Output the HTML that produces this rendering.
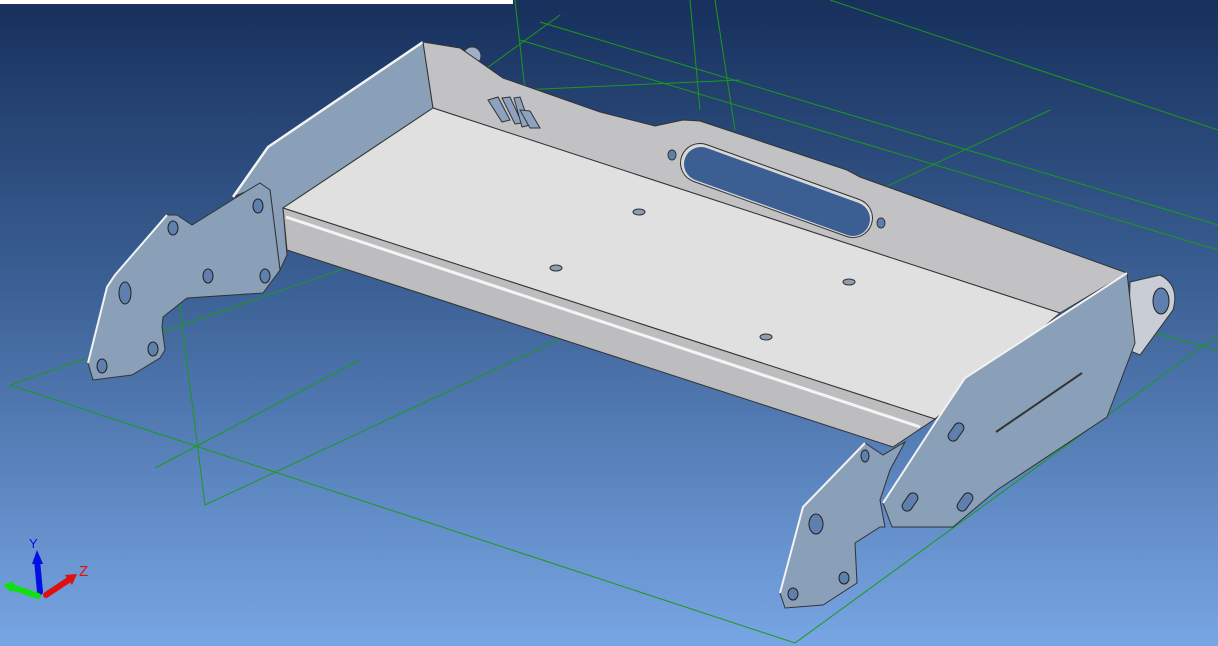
<!DOCTYPE html>
<html><head><meta charset="utf-8"><style>
html,body{margin:0;padding:0;width:1218px;height:646px;overflow:hidden;background:#2a4a7a}
svg{display:block}
</style></head><body>
<svg width="1218" height="646" viewBox="0 0 1218 646" xmlns="http://www.w3.org/2000/svg">
<defs>
<linearGradient id="bg" x1="0" y1="0" x2="0" y2="1">
<stop offset="0" stop-color="#17305c"/>
<stop offset="0.45" stop-color="#3c6196"/>
<stop offset="1" stop-color="#78a6e4"/>
</linearGradient>
</defs>
<rect width="1218" height="646" fill="url(#bg)"/>
<rect x="0" y="0" width="513" height="4" fill="#fff"/>
<g stroke="#1a9a1a" stroke-width="1" fill="none">
<polyline points="10,385 795,643 1218,335"/>
<line x1="10" y1="385" x2="440" y2="235"/>
<polyline points="178,292 205,505 1050,110"/>
<line x1="178" y1="292" x2="560" y2="15"/>
<line x1="155" y1="468" x2="360" y2="360"/>
<line x1="515" y1="0" x2="525" y2="90"/>
<line x1="520" y1="40" x2="1218" y2="250"/>
<line x1="540" y1="22" x2="1218" y2="225"/>
<line x1="830" y1="0" x2="1218" y2="130"/>
<line x1="690" y1="0" x2="700" y2="110"/>
<line x1="715" y1="0" x2="735" y2="130"/>
<line x1="520" y1="90" x2="740" y2="80"/>
<line x1="1030" y1="300" x2="1218" y2="350"/>
</g>
<polygon points="423,42 268,147 233,197 245,192 270,190 280,270 287,255 283,208 433,108" fill="#8a9fb8" stroke="#333" stroke-width="1"/>
<polyline points="423,42 268,147 233,197" fill="none" stroke="#f2f2f2" stroke-width="2.5"/>
<circle cx="472" cy="56" r="9" fill="#9fb0c6" stroke="#333"/>
<polygon points="423,42 460,48 503,78 600,112 655,126 683,120 700,121 847,170 860,177 1127,273 1060,313 433,108" fill="#c2c2c4" stroke="#333" stroke-width="1"/>
<line x1="700" y1="163" x2="853" y2="218" stroke="#333" stroke-width="40" stroke-linecap="round"/>
<line x1="700" y1="163" x2="853" y2="218" stroke="#d8d8d8" stroke-width="38" stroke-linecap="round"/>
<line x1="701" y1="164" x2="853" y2="219" stroke="#3b5e93" stroke-width="34" stroke-linecap="round"/>
<g fill="#5f7fae" stroke="#333"><ellipse cx="672" cy="155" rx="4" ry="5"/><ellipse cx="881" cy="223" rx="4" ry="5"/></g>
<polygon points="433,108 1060,313 935,419 283,208" fill="#e0e0e1" stroke="#333" stroke-width="1"/>
<polygon points="283,208 935,419 893,447 287,250" fill="#bdbdbf" stroke="#333" stroke-width="1"/>
<line x1="286" y1="217" x2="920" y2="427" stroke="#f4f4f4" stroke-width="3"/>
<g fill="#8f9db0" stroke="#333"><ellipse cx="639" cy="212" rx="6" ry="3"/><ellipse cx="556" cy="268" rx="6" ry="3"/><ellipse cx="849" cy="282" rx="6" ry="3"/><ellipse cx="766" cy="337" rx="6" ry="3"/></g>
<g fill="#8ea2c0" stroke="#333"><polygon points="488,100 498,97 510,120 502,122"/><polygon points="502,98 510,97 522,123 515,124"/><polygon points="514,98 520,97 530,125 522,127"/><polygon points="520,110 530,111 540,128 530,128"/></g>
<polygon points="260,183 270,190 280,270 263,293 187,298 163,317 162,327 165,350 160,358 132,375 93,380 88,363 107,287 115,275 167,215 177,215 192,225 245,192" fill="#8a9fb8" stroke="#333" stroke-width="1"/>
<polyline points="88,363 107,287 115,275 167,215" fill="none" stroke="#f2f2f2" stroke-width="2"/>
<g fill="#5f7fae" stroke="#222"><ellipse cx="173" cy="228" rx="5" ry="7"/><ellipse cx="258" cy="206" rx="5" ry="7"/><ellipse cx="125" cy="293" rx="6" ry="11"/><ellipse cx="208" cy="276" rx="5" ry="7"/><ellipse cx="265" cy="276" rx="5" ry="7"/><ellipse cx="153" cy="349" rx="5" ry="7"/><ellipse cx="102" cy="366" rx="5" ry="7"/></g>
<path d="M1130,282 L1160,275 Q1180,285 1173,310 L1140,355 L1128,350 Z" fill="#c8cdd6" stroke="#333"/>
<ellipse cx="1161" cy="301" rx="8" ry="13" fill="#5f7fae" stroke="#222"/>
<polygon points="1127,273 1135,343 1107,417 997,490 953,527 892,527 883,503 937,420 965,378" fill="#8a9fb8" stroke="#333" stroke-width="1"/>
<polyline points="1127,273 965,378 937,420 883,503" fill="none" stroke="#f2f2f2" stroke-width="2"/>
<line x1="1082" y1="373" x2="996" y2="432" stroke="#333" stroke-width="2"/>
<g fill="#5f7fae" stroke="#222"><rect x="951" y="422" width="10" height="20" rx="5" transform="rotate(35 956 432)"/><rect x="905" y="492" width="10" height="20" rx="5" transform="rotate(35 910 502)"/><rect x="960" y="492" width="10" height="20" rx="5" transform="rotate(35 965 502)"/></g>
<polygon points="865,443 883,455 905,442 890,470 880,500 885,527 880,527 855,543 857,583 823,605 785,608 780,593 803,507" fill="#8a9fb8" stroke="#333" stroke-width="1"/>
<polyline points="780,593 803,507 865,443" fill="none" stroke="#f2f2f2" stroke-width="2"/>
<g fill="#5f7fae" stroke="#222"><ellipse cx="865" cy="456" rx="4" ry="6"/><ellipse cx="816" cy="524" rx="7" ry="10"/><ellipse cx="844" cy="578" rx="5" ry="6"/><ellipse cx="793" cy="594" rx="5" ry="6"/></g>
<g stroke-linecap="round">
<line x1="40" y1="592" x2="37" y2="560" stroke="#0010e0" stroke-width="6"/>
<polygon points="32,564 37,550 43,564" fill="#0010e0"/>
<line x1="38" y1="596" x2="12" y2="587" stroke="#10e010" stroke-width="6"/>
<polygon points="14,581 3,585 12,593" fill="#10e010"/>
<line x1="46" y1="595" x2="70" y2="579" stroke="#e01010" stroke-width="6"/>
<polygon points="65,575 77,574 72,585" fill="#e01010"/>
</g>
<text x="29" y="548" font-family="Liberation Sans, sans-serif" font-size="13" fill="#0010e0">Y</text>
<text x="79" y="576" font-family="Liberation Sans, sans-serif" font-size="15" fill="#e01010">Z</text>
</svg>
</body></html>
